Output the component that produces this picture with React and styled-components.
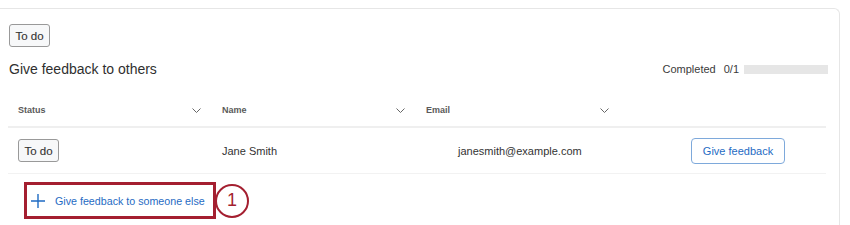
import React from "react";
import styled, { createGlobalStyle } from "styled-components";

const GlobalStyle = createGlobalStyle`
  html, body {
    margin: 0;
    padding: 0;
    background: #fff;
  }
  body {
    font-family: "Liberation Sans", Arial, sans-serif;
    color: #333;
  }
`;

const Card = styled.section`
  margin: 8px 10px 0 0;
  min-height: 217px;
  box-sizing: border-box;
  padding: 15px 13px 0 9px;
  border-top: 1px solid #e6e6e6;
  border-right: 1px solid #e6e6e6;
  border-top-right-radius: 6px;
`;

const Badge = styled.span`
  display: inline-flex;
  align-items: center;
  justify-content: center;
  box-sizing: border-box;
  width: 41px;
  height: 23px;
  border: 1px solid #999;
  border-radius: 3px;
  background: #f7f8f9;
  font-size: 11.5px;
  font-weight: 400;
  -webkit-text-stroke: 0.12px #333;
  color: #333;
`;

const TitleRow = styled.div`
  display: flex;
  align-items: center;
  justify-content: space-between;
  margin-top: 12px;
  height: 20px;
`;

const Title = styled.h2`
  margin: 0;
  font-size: 14px;
  font-weight: 400;
  color: #2f2f2f;
`;

const Progress = styled.div`
  display: flex;
  align-items: center;
  font-size: 11px;
  color: #3a3a3a;
  margin-right: -2px;
`;

const Count = styled.span`
  margin-left: 8px;
`;

const Bar = styled.div`
  width: 84px;
  height: 9px;
  margin-left: 5px;
  background: #e6e6e6;
`;

const Table = styled.div`
  margin: 15px 0 0 -1px;
`;

const Row = styled.div`
  display: grid;
  grid-template-columns: 204px 204px 204px 1fr;
  align-items: center;
  height: ${(p) => (p.$head ? "32px" : "45px")};
  border-bottom: ${(p) => (p.$head ? "2px solid #efefef" : "1px solid #f2f2f2")};
`;

const HeadCell = styled.div`
  display: flex;
  align-items: center;
  justify-content: space-between;
  padding: 0 11px 0 10px;
  font-size: 9px;
  font-weight: 700;
  color: #5a5a5a;
`;

const Cell = styled.div`
  display: flex;
  align-items: center;
  justify-content: ${(p) => (p.$end ? "flex-end" : "flex-start")};
  padding-left: ${(p) => p.$indent || 10}px;
  padding-right: ${(p) => (p.$end ? "41px" : "0")};
  font-size: 11px;
  color: #333;
`;

const OutlineButton = styled.button`
  box-sizing: border-box;
  width: 94px;
  height: 26px;
  border: 1px solid #7ea9db;
  border-radius: 4px;
  background: #fff;
  font-family: inherit;
  font-size: 11px;
  color: #1f6bc3;
  cursor: pointer;
`;

const AddRow = styled.div`
  display: flex;
  align-items: center;
  margin: 8px 0 0 15px;
`;

const Highlight = styled.div`
  box-sizing: border-box;
  width: 192px;
  height: 37px;
  border: 3px solid #a41f30;
  display: flex;
  align-items: center;
`;

const AddLink = styled.button`
  display: flex;
  align-items: center;
  gap: 10px;
  padding: 0 0 0 4px;
  border: none;
  background: none;
  font-family: inherit;
  font-size: 10.7px;
  color: #1f6bc3;
  cursor: pointer;
`;

const Marker = styled.span`
  display: inline-flex;
  align-items: center;
  justify-content: center;
  box-sizing: border-box;
  width: 34px;
  height: 34px;
  margin-left: -1px;
  border: 2.5px solid #a41f30;
  border-radius: 50%;
  background: #fff;
  font-size: 18px;
  color: #a41f30;
`;

const Chevron = () => (
  <svg width="9" height="5" viewBox="0 0 9 5" fill="none">
    <path d="M0.5 0.5 L4.5 4.5 L8.5 0.5" stroke="#666" strokeWidth="1" />
  </svg>
);

const Plus = () => (
  <svg width="14" height="14" viewBox="0 0 14 14" fill="none">
    <path d="M7 0 V14 M0 7 H14" stroke="#1f6bc3" strokeWidth="1.4" />
  </svg>
);

const columns = ["Status", "Name", "Email"];

export default function App() {
  return (
    <>
      <GlobalStyle />
      <Card>
        <Badge>To do</Badge>
        <TitleRow>
          <Title>Give feedback to others</Title>
          <Progress>
            Completed<Count>0/1</Count>
            <Bar />
          </Progress>
        </TitleRow>
        <Table>
          <Row $head>
            {columns.map((c) => (
              <HeadCell key={c}>
                {c}
                <Chevron />
              </HeadCell>
            ))}
            <div />
          </Row>
          <Row>
            <Cell>
              <Badge>To do</Badge>
            </Cell>
            <Cell>Jane Smith</Cell>
            <Cell $indent={42}>janesmith@example.com</Cell>
            <Cell $end>
              <OutlineButton>Give feedback</OutlineButton>
            </Cell>
          </Row>
        </Table>
        <AddRow>
          <Highlight>
            <AddLink>
              <Plus />
              Give feedback to someone else
            </AddLink>
          </Highlight>
          <Marker>1</Marker>
        </AddRow>
      </Card>
    </>
  );
}
